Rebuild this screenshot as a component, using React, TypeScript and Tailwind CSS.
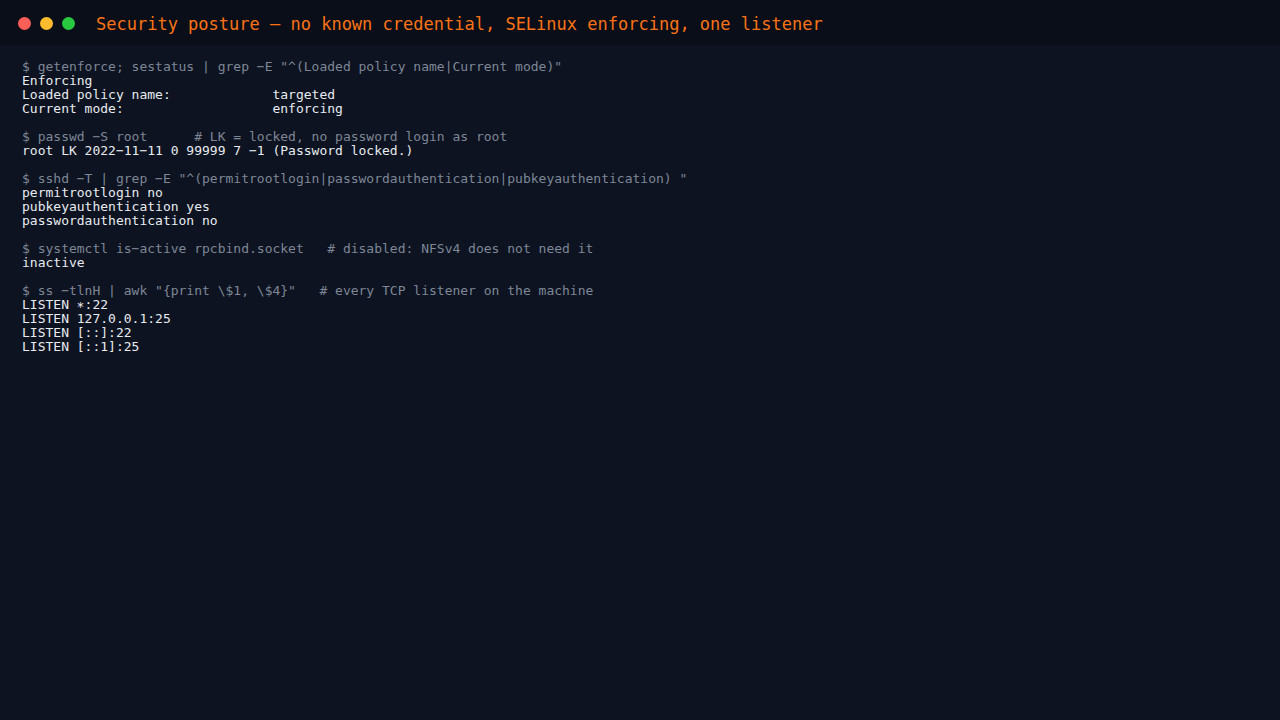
import React from "react";

type Block = { cmd: string; out: string[] };

const blocks: Block[] = [
  {
    cmd: '$ getenforce; sestatus | grep \u2212E "^(Loaded policy name|Current mode)"',
    out: [
      "Enforcing",
      "Loaded policy name:             targeted",
      "Current mode:                   enforcing",
    ],
  },
  {
    cmd: "$ passwd \u2212S root      # LK = locked, no password login as root",
    out: ["root LK 2022\u221211\u221211 0 99999 7 \u22121 (Password locked.)"],
  },
  {
    cmd: '$ sshd \u2212T | grep \u2212E "^(permitrootlogin|passwordauthentication|pubkeyauthentication) "',
    out: ["permitrootlogin no", "pubkeyauthentication yes", "passwordauthentication no"],
  },
  {
    cmd: "$ systemctl is\u2212active rpcbind.socket   # disabled: NFSv4 does not need it",
    out: ["inactive"],
  },
  {
    cmd: '$ ss \u2212tlnH | awk "{print \\$1, \\$4}"   # every TCP listener on the machine',
    out: ["LISTEN \u2217:22", "LISTEN 127.0.0.1:25", "LISTEN [::]:22", "LISTEN [::1]:25"],
  },
];

export default function App() {
  return (
    <div
      className="w-[1280px] h-[720px] bg-[#0d1320] flex flex-col overflow-hidden"
      style={{ fontFamily: '"DejaVu Sans Mono", "Liberation Mono", monospace' }}
    >
      <div className="h-[45px] bg-[#0a0e18] flex items-center pl-[18px] pt-[1px] shrink-0">
        <div className="flex items-center gap-[9px]">
          <span className="w-[13px] h-[13px] rounded-full bg-[#ff5f57]" />
          <span className="w-[13px] h-[13px] rounded-full bg-[#febc2e]" />
          <span className="w-[13px] h-[13px] rounded-full bg-[#28c840]" />
        </div>
        <div className="ml-[21px] mt-[2px] text-[17px] leading-[20px] text-[#f97316] whitespace-pre">
          Security posture — no known credential, SELinux enforcing, one listener
        </div>
      </div>
      <div className="px-[22px] pt-[15px] flex flex-col gap-[14px] text-[13px] leading-[14px]">
        {blocks.map((b, i) => (
          <div key={i} className="flex flex-col">
            <div className="whitespace-pre text-[#7d8797]">{b.cmd}</div>
            {b.out.map((l, j) => (
              <div key={j} className="whitespace-pre text-[#e8ebf0]">
                {l}
              </div>
            ))}
          </div>
        ))}
      </div>
    </div>
  );
}
